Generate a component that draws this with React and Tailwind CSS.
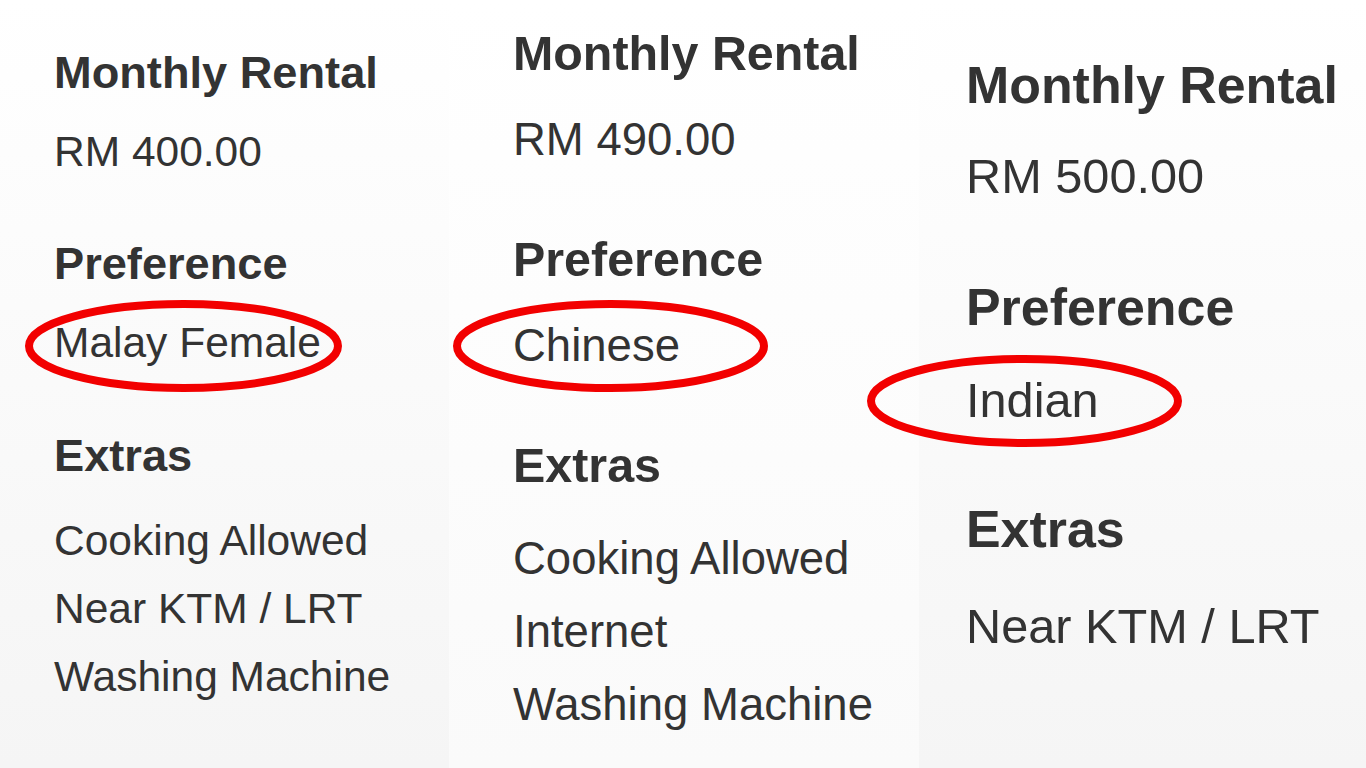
const columns = [
  {
    width: 'w-[449px]',
    bg: 'bg-gradient-to-b from-white to-[#f5f5f5]',
    pad: 'pl-[54px] pt-[39px]',
    head: 'text-[45.2px] leading-[68px]',
    body: 'text-[42.5px] leading-[68px]',
    gaps: ['mt-[11px]', 'mt-[44px]', 'mt-[11px]', 'mt-[45px]', 'mt-[17px]'],
    rent: 'RM 400.00',
    pref: 'Malay Female',
    extras: ['Cooking Allowed', 'Near KTM / LRT', 'Washing Machine'],
  },
  {
    width: 'w-[470px]',
    bg: 'bg-gradient-to-b from-white to-[#fafafa]',
    pad: 'pl-[64px] pt-[17px]',
    head: 'text-[48.4px] leading-[73px]',
    body: 'text-[45.5px] leading-[73px]',
    gaps: ['mt-[13px]', 'mt-[47px]', 'mt-[13px]', 'mt-[47px]', 'mt-[20px]'],
    rent: 'RM 490.00',
    pref: 'Chinese',
    extras: ['Cooking Allowed', 'Internet', 'Washing Machine'],
  },
  {
    width: 'flex-1',
    bg: 'bg-gradient-to-b from-white to-[#f5f5f5]',
    pad: 'pl-[47px] pt-[46px]',
    head: 'text-[51.9px] leading-[78px]',
    body: 'text-[48.7px] leading-[78px]',
    gaps: ['mt-[13px]', 'mt-[53px]', 'mt-[15px]', 'mt-[51px]', 'mt-[19px]'],
    rent: 'RM 500.00',
    pref: 'Indian',
    extras: ['Near KTM / LRT'],
  },
];

// red marker circles drawn over the screenshot
const marks = [
  { cx: 183.5, cy: 346, rx: 154.5, ry: 42 },
  { cx: 610.5, cy: 346, rx: 153.5, ry: 42 },
  { cx: 1024.5, cy: 401, rx: 153.5, ry: 42 },
];

const Column = ({ col }) => (
  <div className={`${col.width} ${col.bg} ${col.pad} h-full whitespace-nowrap text-[#333]`}>
    <div className={`${col.head} font-bold`}>Monthly Rental</div>
    <div className={`${col.body} ${col.gaps[0]}`}>{col.rent}</div>
    <div className={`${col.head} font-bold ${col.gaps[1]}`}>Preference</div>
    <div className={`${col.body} ${col.gaps[2]}`}>{col.pref}</div>
    <div className={`${col.head} font-bold ${col.gaps[3]}`}>Extras</div>
    <div className={col.gaps[4]}>
      {col.extras.map((e) => (
        <div key={e} className={col.body}>{e}</div>
      ))}
    </div>
  </div>
);

export default function App() {
  return (
    <div className="relative flex h-[768px] w-[1366px] overflow-hidden bg-white font-[family-name:'Liberation_Sans',Arial,sans-serif]">
      {columns.map((col, i) => (
        <Column key={i} col={col} />
      ))}

      <svg className="pointer-events-none absolute inset-0" width="1366" height="768" viewBox="0 0 1366 768">
        {marks.map((m, i) => (
          <ellipse key={i} cx={m.cx} cy={m.cy} rx={m.rx} ry={m.ry} fill="none" stroke="#f20000" strokeWidth="8" />
        ))}
      </svg>
    </div>
  );
}
